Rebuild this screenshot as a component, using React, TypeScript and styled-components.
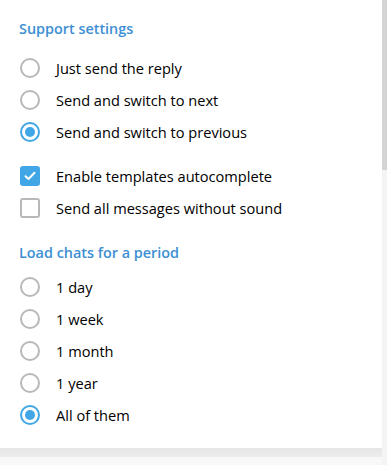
import React from "react";
import styled, { createGlobalStyle } from "styled-components";

const GlobalStyle = createGlobalStyle`
  html, body { margin: 0; padding: 0; }
  body {
    background: #f7f7f7;
    font-family: "Open Sans", "DejaVu Sans", sans-serif;
    -webkit-font-smoothing: antialiased;
  }
`;

const Frame = styled.div`
  width: 387px;
  height: 465px;
  display: flex;
  overflow: hidden;
  position: relative;
`;

const Column = styled.div`
  flex: 1;
  display: flex;
  flex-direction: column;
`;

const Panel = styled.div`
  height: 448px;
  background: #ffffff;
  display: flex;
  flex-direction: column;
  padding-top: 18px;
  box-sizing: border-box;
`;

const ShadowBand = styled.div`
  height: 9px;
  background: linear-gradient(#e6e6e6, #ededed);
`;

const Rest = styled.div`
  flex: 1;
  background: #f8f8f8;
`;

const ScrollTrack = styled.div`
  width: 5px;
  background: #f4f4f4;
  display: flex;
  flex-direction: column;
`;

const ScrollThumb = styled.div`
  height: 170px;
  background: #d4d4d4;
`;

const Header = styled.div<{ $after: number }>`
  height: 22px;
  line-height: 22px;
  padding-left: 19px;
  margin-bottom: ${(p) => p.$after}px;
  color: #3d8fd4;
  font-size: 14.4px;
  font-weight: 600;
`;

const Group = styled.div<{ $after: number }>`
  display: flex;
  flex-direction: column;
  margin-bottom: ${(p) => p.$after}px;
`;

const Row = styled.div`
  height: 32px;
  display: flex;
  align-items: center;
  padding-left: 20px;
  gap: 16px;
  font-size: 14.6px;
  color: #000;
`;

const RadioRing = styled.span<{ $on: boolean }>`
  width: 20px;
  height: 20px;
  box-sizing: border-box;
  border-radius: 50%;
  border: 2px solid ${(p) => (p.$on ? "#40a6e6" : "#b8b8b8")};
  display: flex;
  align-items: center;
  justify-content: center;
  flex: none;
`;

const RadioDot = styled.span`
  width: 10px;
  height: 10px;
  border-radius: 50%;
  background: #40a6e6;
`;

const Box = styled.span<{ $on: boolean }>`
  width: 20px;
  height: 20px;
  box-sizing: border-box;
  border-radius: 3px;
  border: 2px solid ${(p) => (p.$on ? "#40a6e6" : "#b8b8b8")};
  background: ${(p) => (p.$on ? "#40a6e6" : "#fff")};
  display: flex;
  align-items: center;
  justify-content: center;
  flex: none;
`;

const Label = styled.span`
  white-space: nowrap;
`;

function Radio({ label, on }: { label: string; on?: boolean }) {
  return (
    <Row>
      <RadioRing $on={!!on}>{on && <RadioDot />}</RadioRing>
      <Label>{label}</Label>
    </Row>
  );
}

function Check({ label, on }: { label: string; on?: boolean }) {
  return (
    <Row>
      <Box $on={!!on}>
        {on && (
          <svg width="12" height="10" viewBox="0 0 12 10">
            <path d="M1.5 5.2 L4.5 8 L10.5 1.8" fill="none" stroke="#fff" strokeWidth="2" strokeLinecap="round" strokeLinejoin="round" />
          </svg>
        )}
      </Box>
      <Label>{label}</Label>
    </Row>
  );
}

export default function App() {
  return (
    <>
      <GlobalStyle />
      <Frame>
        <Column>
          <Panel>
            <Header $after={12}>Support settings</Header>
            <Group $after={12}>
              <Radio label="Just send the reply" />
              <Radio label="Send and switch to next" />
              <Radio label="Send and switch to previous" on />
            </Group>
            <Group $after={18}>
              <Check label="Enable templates autocomplete" on />
              <Check label="Send all messages without sound" />
            </Group>
            <Header $after={7}>Load chats for a period</Header>
            <Group $after={0}>
              <Radio label="1 day" />
              <Radio label="1 week" />
              <Radio label="1 month" />
              <Radio label="1 year" />
              <Radio label="All of them" on />
            </Group>
          </Panel>
          <ShadowBand />
          <Rest />
        </Column>
        <ScrollTrack>
          <ScrollThumb />
        </ScrollTrack>
      </Frame>
    </>
  );
}
